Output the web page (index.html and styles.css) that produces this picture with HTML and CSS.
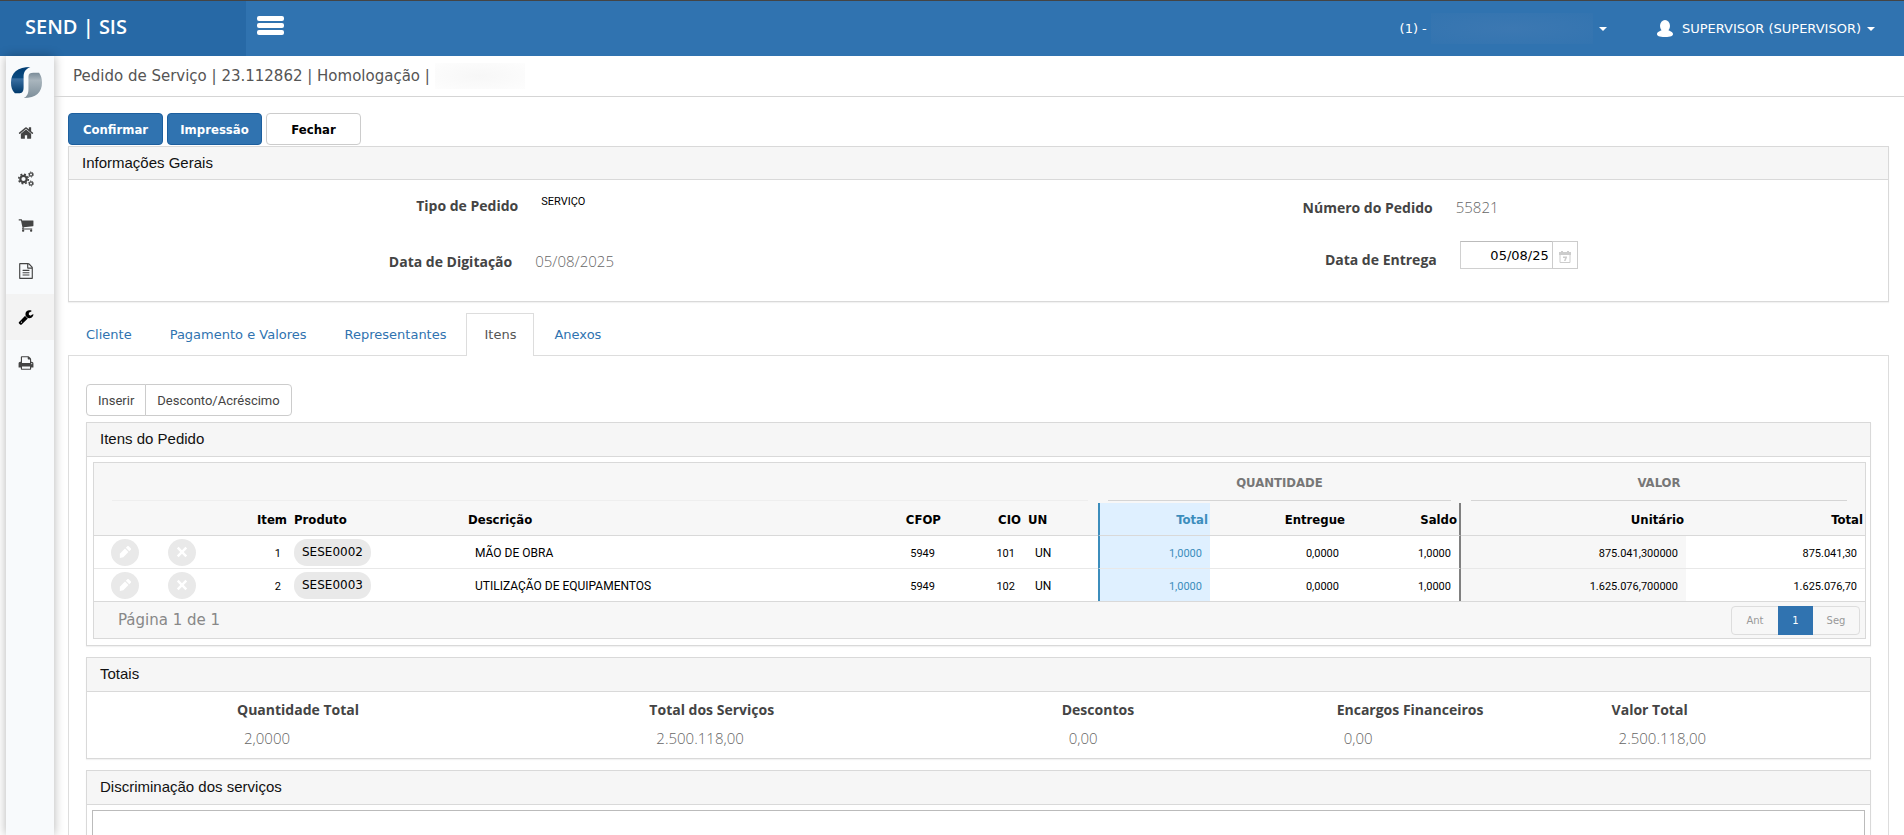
FILE: index.html
```
<!DOCTYPE html>
<html lang="pt-BR">
<head>
    <meta charset="UTF-8">
    <meta name="viewport" content="width=device-width, initial-scale=1.0">
    <title>SEND | SIS - Pedido de Serviço</title>
    <link rel="stylesheet" href="styles.css">
</head>
<body>
    <header class="topbar">
        <a href="#" class="brand">SEND | SIS</a>
        <button type="button" class="menu-toggle" aria-label="Menu"><span></span><span></span><span></span></button>
        <nav class="top-links">
            <a href="#" class="company">(1) - <span class="company-name"></span><span class="caret"></span></a>
            <a href="#" class="user"><svg class="user-icon" viewBox="0 0 16 17"><ellipse cx="8" cy="6" rx="5" ry="6"/><path d="M0 14c0-2 3-3 5-4h6c2 1 5 2 5 4 0 2-2 3-8 3s-8-1-8-3z"/></svg>SUPERVISOR (SUPERVISOR)<span class="caret"></span></a>
        </nav>
    </header>

    <div class="layout">
        <nav class="sidebar">
            <a href="#" class="logo" aria-label="Início">
                <svg viewBox="0 0 32 32">
                    <defs>
                        <linearGradient id="logoBlue" x1="0" y1="0" x2="0" y2="1">
                            <stop offset="0" stop-color="#003c72"/>
                            <stop offset=".42" stop-color="#0a4a80"/>
                            <stop offset=".45" stop-color="#3b70a3"/>
                            <stop offset="1" stop-color="#00396b"/>
                        </linearGradient>
                        <linearGradient id="logoGray" x1="0" y1="0" x2="0" y2="1">
                            <stop offset="0" stop-color="#7b8c99"/>
                            <stop offset=".3" stop-color="#a9b5bd"/>
                            <stop offset="1" stop-color="#7d8e9a"/>
                        </linearGradient>
                    </defs>
                    <path fill="url(#logoBlue)" d="M20 0C7 0 0 6 0 16c0 5 1 8 4 11h5c3 0 4-2 4-6V10c0-5 2-8 7-10z"/>
                    <path fill="url(#logoGray)" d="M18 10c0-3 2-4 5-4h6c2 3 3 6 3 10 0 10-6 16-19 16 3-1 5-4 5-9z"/>
                </svg>
            </a>
            <a href="#" class="side-link" aria-label="Home">
                <svg viewBox="0 0 1792 1792"><path d="M1472 992v480q0 26-19 45t-45 19h-384v-384h-256v384h-384q-26 0-45-19t-19-45v-480q0-1 .5-3t.5-3l575-474 575 474q1 2 1 6zm223-69l-62 74q-8 9-21 11h-3q-13 0-21-7l-692-577-692 577q-12 8-24 7-13-2-21-11l-62-74q-8-10-7-23.500t11-21.500l719-599q32-26 76-26t76 26l244 204v-195q0-14 9-23t23-9h192q14 0 23 9t9 23v408l219 182q10 8 11 21.500t-7 23.500z"/></svg>
            </a>
            <a href="#" class="side-link" aria-label="Configurações">
                <svg viewBox="0 0 16 16" fill="none" stroke="currentColor">
                    <circle cx="5.500" cy="8" r="3.200" stroke-width="2.200"/>
                    <circle cx="5.500" cy="8" r="4.800" stroke-width="1.600" stroke-dasharray="1.900 1.870"/>
                    <circle cx="13" cy="3.500" r="1.600" stroke-width="1.200"/>
                    <circle cx="13" cy="3.500" r="2.500" stroke-width="1" stroke-dasharray="1.200 1.418"/>
                    <circle cx="13" cy="12.500" r="1.600" stroke-width="1.200"/>
                    <circle cx="13" cy="12.500" r="2.500" stroke-width="1" stroke-dasharray="1.200 1.418"/>
                </svg>
            </a>
            <a href="#" class="side-link" aria-label="Vendas">
                <svg viewBox="0 0 1792 1792"><path d="M704 1536q0 52-38 90t-90 38-90-38-38-90 38-90 90-38 90 38 38 90zm896 0q0 52-38 90t-90 38-90-38-38-90 38-90 90-38 90 38 38 90zm128-1088v512q0 24-16.500 42.500t-40.500 21.500l-1044 122q13 60 13 70 0 16-24 64h920q26 0 45 19t19 45-19 45-45 19h-1024q-26 0-45-19t-19-45q0-11 8-31.500t16-36 21.500-40 15.500-29.500l-177-823h-204q-26 0-45-19t-19-45 19-45 45-19h256q16 0 28.500 6.500t19.500 15.500 13 24.500 8 26 5.500 29.500 4.500 26h1201q26 0 45 19t19 45z"/></svg>
            </a>
            <a href="#" class="side-link" aria-label="Documentos">
                <svg viewBox="0 0 1792 1792"><path d="M1596 380q28 28 48 76t20 88v1152q0 40-28 68t-68 28h-1344q-40 0-68-28t-28-68v-1600q0-40 28-68t68-28h896q40 0 88 20t76 48zm-444-244v376h376q-10-29-22-41l-313-313q-12-12-41-22zm384 1528v-1024h-416q-40 0-68-28t-28-68v-416h-768v1536h1280zm-1024-864q0-14 9-23t23-9h704q14 0 23 9t9 23v64q0 14-9 23t-23 9h-704q-14 0-23-9t-9-23v-64zm736 224q14 0 23 9t9 23v64q0 14-9 23t-23 9h-704q-14 0-23-9t-9-23v-64q0-14 9-23t23-9h704zm0 256q14 0 23 9t9 23v64q0 14-9 23t-23 9h-704q-14 0-23-9t-9-23v-64q0-14 9-23t23-9h704z"/></svg>
            </a>
            <a href="#" class="side-link active" aria-label="Serviços">
                <svg viewBox="0 0 1792 1792"><path d="M448 1472q0-26-19-45t-45-19-45 19-19 45 19 45 45 19 45-19 19-45zm644-420l-682 682q-37 37-90 37-52 0-91-37l-106-108q-38-36-38-90 0-53 38-91l681-681q39 98 114.500 173.500t173.500 114.500zm634-435q0 39-23 106-47 134-164.500 217.500t-258.500 83.500q-185 0-316.500-131.500t-131.500-316.500 131.500-316.500 316.500-131.500q58 0 121.500 16.500t107.500 46.500q16 11 16 28t-16 28l-293 169v224l193 107q5-3 79-48.500t135.500-81 70.500-35.500q15 0 23.500 10t8.500 25z"/></svg>
            </a>
            <a href="#" class="side-link" aria-label="Relatórios">
                <svg viewBox="0 0 1792 1792"><path d="M448 1536h896v-256h-896v256zm0-640h896v-384h-160q-40 0-68-28t-28-68v-160h-640v640zm1152 64q0-26-19-45t-45-19-45 19-19 45 19 45 45 19 45-19 19-45zm128 0v416q0 13-9.500 22.500t-22.500 9.500h-224v160q0 40-28 68t-68 28h-960q-40 0-68-28t-28-68v-160h-224q-13 0-22.500-9.500t-9.500-22.500v-416q0-79 56.500-135.500t135.500-56.500h64v-544q0-40 28-68t68-28h672q40 0 88 20t76 48l152 152q28 28 48 76t20 88v256h64q79 0 135.500 56.500t56.500 135.500z"/></svg>
            </a>
        </nav>

        <main class="content">
            <div class="page-title">Pedido de Serviço | 23.112862 | Homologação | <span class="page-env"></span></div>

            <div class="page-body">
                <div class="actions">
                    <button type="button" class="btn btn-primary">Confirmar</button>
                    <button type="button" class="btn btn-primary">Impressão</button>
                    <button type="button" class="btn">Fechar</button>
                </div>

                <section class="panel">
                    <h2 class="panel-title">Informações Gerais</h2>
                    <div class="form">
                        <div class="form-col">
                            <div class="form-row form-row-order">
                                <span class="label">Tipo de Pedido</span>
                                <span class="value-small">SERVIÇO</span>
                            </div>
                            <div class="form-row">
                                <span class="label">Data de Digitação</span>
                                <span class="value">05/08/2025</span>
                            </div>
                        </div>
                        <div class="form-col form-col-right">
                            <div class="form-row">
                                <span class="label">Número do Pedido</span>
                                <span class="value">55821</span>
                            </div>
                            <div class="form-row form-row-date">
                                <label class="label" for="entrega">Data de Entrega</label>
                                <div class="date-field">
                                    <input type="text" id="entrega" value="05/08/25">
                                    <button type="button" aria-label="Abrir calendário">
                                        <svg viewBox="0 0 12 12"><path d="M1 3v8.500h10V3" fill="none" stroke="#ccc"/><path d="M0 1h2V0h2v1h4V0h2v1h2v3H0z" fill="#ccc"/><path d="M4 5.500h4v1L6.500 10H5l1-3H4z" fill="#ccc"/></svg>
                                    </button>
                                </div>
                            </div>
                        </div>
                    </div>
                </section>

                <nav class="tabs">
                    <a href="#">Cliente</a>
                    <a href="#">Pagamento e Valores</a>
                    <a href="#">Representantes</a>
                    <a href="#" class="active">Itens</a>
                    <a href="#">Anexos</a>
                </nav>

                <div class="tab-content">
                    <div class="btn-group">
                        <button type="button">Inserir</button>
                        <button type="button">Desconto/Acréscimo</button>
                    </div>

                    <section class="panel">
                        <h2 class="panel-title">Itens do Pedido</h2>
                        <div class="grid-wrap">
                            <table class="grid">
                                <colgroup>
                                    <col class="c-edit"><col class="c-remove"><col class="c-item"><col class="c-product"><col>
                                    <col class="c-cfop"><col class="c-cio"><col class="c-un"><col class="c-total"><col class="c-delivered">
                                    <col class="c-balance"><col class="c-unit"><col class="c-amount">
                                </colgroup>
                                <thead>
                                    <tr class="groups">
                                        <th colspan="8"><span class="group group-empty"></span></th>
                                        <th colspan="3"><span class="group">QUANTIDADE</span></th>
                                        <th colspan="2"><span class="group group-last">VALOR</span></th>
                                    </tr>
                                    <tr class="columns">
                                        <th></th>
                                        <th></th>
                                        <th class="num">Item</th>
                                        <th>Produto</th>
                                        <th>Descrição</th>
                                        <th class="num">CFOP</th>
                                        <th class="num">CIO</th>
                                        <th>UN</th>
                                        <th class="num highlight">Total</th>
                                        <th class="num">Entregue</th>
                                        <th class="num divider">Saldo</th>
                                        <th class="num">Unitário</th>
                                        <th class="num">Total</th>
                                    </tr>
                                </thead>
                                <tbody>
                                    <tr>
                                        <td class="icon"><button type="button" class="round" aria-label="Editar"><svg viewBox="0 0 14 14"><path d="M1 9l6-6 4 4-6 6-4 1zM8 2l2-2h1l3 3v1l-2 2z"/></svg></button></td>
                                        <td class="icon"><button type="button" class="round" aria-label="Excluir"><svg viewBox="0 0 14 14"><path d="M3 1l4 4 4-4 2 2-4 4 4 4-2 2-4-4-4 4-2-2 4-4-4-4z"/></svg></button></td>
                                        <td class="num">1</td>
                                        <td class="product"><span class="badge">SESE0002</span></td>
                                        <td class="text">MÃO DE OBRA</td>
                                        <td class="num">5949</td>
                                        <td class="num">101</td>
                                        <td class="text">UN</td>
                                        <td class="num highlight">1,0000</td>
                                        <td class="num">0,0000</td>
                                        <td class="num divider">1,0000</td>
                                        <td class="num shaded">875.041,300000</td>
                                        <td class="num">875.041,30</td>
                                    </tr>
                                    <tr>
                                        <td class="icon"><button type="button" class="round" aria-label="Editar"><svg viewBox="0 0 14 14"><path d="M1 9l6-6 4 4-6 6-4 1zM8 2l2-2h1l3 3v1l-2 2z"/></svg></button></td>
                                        <td class="icon"><button type="button" class="round" aria-label="Excluir"><svg viewBox="0 0 14 14"><path d="M3 1l4 4 4-4 2 2-4 4 4 4-2 2-4-4-4 4-2-2 4-4-4-4z"/></svg></button></td>
                                        <td class="num">2</td>
                                        <td class="product"><span class="badge">SESE0003</span></td>
                                        <td class="text">UTILIZAÇÃO DE EQUIPAMENTOS</td>
                                        <td class="num">5949</td>
                                        <td class="num">102</td>
                                        <td class="text">UN</td>
                                        <td class="num highlight">1,0000</td>
                                        <td class="num">0,0000</td>
                                        <td class="num divider">1,0000</td>
                                        <td class="num shaded">1.625.076,700000</td>
                                        <td class="num">1.625.076,70</td>
                                    </tr>
                                </tbody>
                            </table>
                            <div class="grid-footer">
                                <span>Página 1 de 1</span>
                                <div class="pager">
                                    <button type="button">Ant</button>
                                    <button type="button" class="current">1</button>
                                    <button type="button">Seg</button>
                                </div>
                            </div>
                        </div>
                    </section>

                    <section class="panel">
                        <h2 class="panel-title">Totais</h2>
                        <dl class="totals">
                            <div><dt>Quantidade Total</dt><dd>2,0000</dd></div>
                            <div><dt>Total dos Serviços</dt><dd>2.500.118,00</dd></div>
                            <div><dt>Descontos</dt><dd>0,00</dd></div>
                            <div><dt>Encargos Financeiros</dt><dd>0,00</dd></div>
                            <div><dt>Valor Total</dt><dd>2.500.118,00</dd></div>
                        </dl>
                    </section>

                    <section class="panel">
                        <h2 class="panel-title"><label for="discriminacao">Discriminação dos serviços</label></h2>
                        <div class="notes">
                            <textarea id="discriminacao" rows="6"></textarea>
                        </div>
                    </section>
                </div>
            </div>
        </main>
    </div>
</body>
</html>
```
FILE: styles.css
```
* {
    box-sizing: border-box;
}

body {
    margin: 0;
    height: 100vh;
    overflow: hidden;
    display: flex;
    flex-direction: column;
    background: #fff;
    color: #444;
    font-family: "DejaVu Sans", sans-serif;
    font-size: 13px;
}

a {
    text-decoration: none;
}

button,
input,
textarea {
    font-family: inherit;
    font-size: inherit;
    margin: 0;
}

button {
    cursor: pointer;
}

/* Top bar */
.topbar {
    flex: none;
    display: flex;
    height: 56px;
    background: #3073b0;
    border-top: 1px solid #444;
    color: #fff;
}

.brand {
    width: 246px;
    padding-left: 25px;
    background: #2769a6;
    color: #fff;
    font-family: "Open Sans", sans-serif;
    font-size: 20px;
    font-weight: 600;
    line-height: 52px;
}

.menu-toggle {
    display: flex;
    flex-direction: column;
    gap: 2px;
    height: 35px;
    padding: 15px 11px 0;
    border: 0;
    background: none;
}

.menu-toggle span {
    width: 27px;
    height: 5px;
    border-radius: 2px;
    background: #fff;
}

.top-links {
    display: flex;
    align-items: center;
    gap: 50px;
    margin-left: auto;
    padding-right: 29px;
}

.top-links a {
    display: flex;
    align-items: center;
    color: #fff;
    white-space: pre;
}

.company-name {
    width: 162px;
    height: 31px;
    background: radial-gradient(#3c78b2, #3374b0);
}

.caret {
    margin-left: 6px;
    border: 4px solid transparent;
    border-top-color: #fff;
    border-bottom: 0;
}

.user-icon {
    width: 16px;
    height: 17px;
    margin-right: 9px;
    fill: #fff;
}

/* Side menu */
.layout {
    flex: 1;
    display: flex;
    min-height: 0;
}

.sidebar {
    flex: none;
    width: 48px;
    margin-left: 6px;
    background: #f8fafc;
    box-shadow: 0 0 10px rgba(0, 0, 0, 0.3);
}

.logo {
    display: block;
    height: 54px;
    padding: 11px 5px 0;
}

.logo svg {
    display: block;
    width: 31px;
    height: 31px;
}

.side-link {
    display: flex;
    align-items: center;
    height: 46px;
    padding-left: 12px;
    color: #444;
}

.side-link svg {
    width: 16px;
    height: 16px;
}

.side-link path {
    fill: currentColor;
}

.side-link.active {
    background: #f3f3f3;
    color: #000;
}

/* Page */
.content {
    flex: 1;
    min-width: 0;
}

.page-title {
    display: flex;
    align-items: center;
    height: 41px;
    padding-left: 19px;
    border-bottom: 1px solid #d5d5d5;
    color: #555;
    font-size: 15px;
    white-space: pre;
}

.page-env {
    width: 90px;
    height: 26px;
    background: radial-gradient(#f7f7f7, #fdfdfd);
}

.page-body {
    padding: 16px 15px 0 14px;
}

.actions {
    display: flex;
    gap: 4px;
    margin-bottom: 1px;
}

.btn {
    width: 95px;
    height: 32px;
    border: 1px solid #ccc;
    border-radius: 4px;
    background: #fff;
    color: #000;
    font-family: "DejaVu Sans Condensed", "DejaVu Sans", sans-serif;
    font-weight: bold;
}

.btn-primary {
    border-color: #1d5f9e;
    background: #3073b0;
    color: #fff;
}

.panel {
    border: 1px solid #d9d9d9;
    background: #fff;
    box-shadow: 0 1px 1px rgba(0, 0, 0, 0.05);
}

.panel-title {
    margin: 0;
    height: 33px;
    padding-left: 13px;
    border-bottom: 1px solid #d9d9d9;
    background: #f6f6f6;
    color: #111;
    font-family: "Liberation Sans", sans-serif;
    font-size: 15px;
    font-weight: normal;
    line-height: 32px;
}

/* General info */
.form {
    display: grid;
    grid-template-columns: 1fr 1fr;
    height: 121px;
    padding-top: 15px;
}

.form-col {
    display: flex;
    flex-direction: column;
    gap: 36px;
}

.form-col-right {
    gap: 32px;
    padding-top: 2px;
}

.form-row {
    display: grid;
    grid-template-columns: 1fr 1fr;
    grid-template-rows: 20px;
    gap: 23px;
    align-items: center;
}

.form-row-order {
    padding-left: 12px;
}

.form-col-right .form-row {
    padding-left: 22px;
}

.form-col-right .form-row-date {
    padding-left: 30px;
}

.label,
dt {
    color: #444;
    font-family: "Open Sans", sans-serif;
    font-size: 14px;
    font-weight: bold;
}

.label {
    text-align: right;
}

.value,
dd {
    color: #666;
    font-family: "Open Sans", sans-serif;
    font-size: 15px;
    font-weight: 300;
}

.value-small {
    align-self: start;
    color: #000;
    font-family: Roboto, sans-serif;
    font-size: 11px;
}

.date-field {
    display: flex;
    align-self: end;
}

.date-field input {
    width: 93px;
    height: 28px;
    padding: 0 3px;
    border: 1px solid #d0d0d0;
    border-top-color: #bbb;
    background: #fff;
    color: #000;
    text-align: right;
}

.date-field button {
    width: 26px;
    margin-left: -1px;
    padding: 4px 0 0 6px;
    border: 1px solid #ccc;
    background: #fff;
}

.date-field svg {
    display: block;
    width: 12px;
    height: 12px;
}

/* Tabs */
.tabs {
    display: flex;
    margin-top: 11px;
    height: 43px;
    border-bottom: 1px solid #ddd;
    line-height: 41px;
}

.tabs a {
    height: 43px;
    margin-right: 2px;
    padding: 0 17px;
    border: 1px solid transparent;
    border-bottom: 0;
    color: #3073b0;
}

.tabs .active {
    border-color: #ddd;
    background: #fff;
    color: #555;
}

.tab-content {
    padding: 28px 17px 0;
    border: 1px solid #ddd;
    border-top: 0;
}

.tab-content .panel {
    margin-bottom: 11px;
}

.tab-content .panel-title {
    height: 34px;
}

.btn-group {
    display: flex;
    margin-bottom: 6px;
}

.btn-group button {
    height: 32px;
    padding: 0 11px;
    border: 1px solid #ccc;
    border-radius: 4px;
    background: #fff;
    color: #444;
    font-family: Roboto, sans-serif;
}

.btn-group button:first-child {
    border-radius: 4px 0 0 4px;
}

.btn-group button:last-child {
    margin-left: -1px;
    border-radius: 0 4px 4px 0;
}

/* Items table */
.grid-wrap {
    padding: 5px 4px 6px 6px;
}

.grid {
    width: 100%;
    table-layout: fixed;
    border: 1px solid #d9d9d9;
    border-spacing: 0;
    color: #000;
}

.c-edit { width: 57px; }
.c-remove { width: 58px; }
.c-item { width: 80px; }
.c-product { width: 174px; }
.c-cfop { width: 78px; }
.c-cio { width: 80px; }
.c-un { width: 75px; }
.c-total { width: 112px; }
.c-delivered { width: 137px; }
.c-balance { width: 114px; }
.c-unit { width: 225px; }
.c-amount { width: 179px; }

.grid th {
    padding: 0 2px 0 5px;
    background: #f7f7f7;
    font-family: "DejaVu Sans Condensed", "DejaVu Sans", sans-serif;
    font-size: 13px;
    font-weight: bold;
    text-align: left;
}

.grid .groups th {
    height: 40px;
    padding: 0 10px;
    vertical-align: top;
}

.grid .groups th:first-child {
    padding-left: 18px;
}

.group {
    display: block;
    height: 38px;
    border-bottom: 1px solid #d5d5d5;
    color: #777;
    line-height: 40px;
    text-align: center;
}

.group-empty {
    border-color: #eee;
}

.group-last {
    margin-right: 8px;
}

.grid .columns th {
    height: 33px;
    border-bottom: 1px solid #d9d9d9;
}

.grid td {
    height: 33px;
    padding: 2px 8px 0 5px;
    border-bottom: 1px solid #e8e8e8;
    font-family: Roboto, sans-serif;
    font-size: 12px;
}

.grid tbody tr:last-child td {
    height: 32px;
    border-bottom: 0;
}

.grid .num {
    text-align: right;
}

.grid td.num {
    font-size: 11px;
}

.grid .text {
    padding-left: 12px;
}

.grid .highlight {
    border-left: 2px solid #3c8dbc;
    background: #dff0ff;
    color: #3c8dbc;
}

.grid .divider {
    border-right: 2px solid #808080;
}

.grid .shaded {
    background: #f7f7f7;
}

.grid .icon {
    padding: 0 0 0 17px;
}

.grid .product {
    padding: 0 0 0 5px;
}

.round {
    display: flex;
    align-items: center;
    justify-content: center;
    width: 28px;
    height: 27px;
    padding: 0;
    border: 0;
    border-radius: 50%;
    background: #e9e9e9;
}

.round svg {
    width: 12px;
    height: 12px;
    fill: #fff;
}

.badge {
    display: block;
    width: max-content;
    padding: 0 8px;
    border-radius: 13px;
    background: #e9e9e9;
    font-family: "DejaVu Sans", sans-serif;
    line-height: 27px;
}

.grid-footer {
    display: flex;
    align-items: center;
    justify-content: space-between;
    height: 37px;
    padding: 0 5px 0 24px;
    border: 1px solid #d9d9d9;
    border-top: 0;
    background: #f7f7f7;
    color: #888;
    font-size: 15px;
}

.pager {
    display: flex;
    height: 29px;
    border: 1px solid #ddd;
    border-radius: 4px;
}

.pager button {
    width: 46px;
    padding: 0;
    border: 0;
    background: none;
    color: #999;
    font-size: 10px;
}

.pager .current {
    width: 35px;
    margin: -1px 0;
    background: #3073b0;
    color: #fff;
}

/* Totals */
.totals {
    display: grid;
    grid-template-columns: 150fr 150fr 100fr 100fr 94fr;
    margin: 0;
    height: 66px;
    padding: 8px 0 0 150px;
}

.totals dt {
    line-height: 20px;
}

.totals dd {
    margin: 8px 0 0 7px;
    line-height: 20px;
}

.notes {
    padding: 5px;
}

.notes textarea {
    display: block;
    width: 100%;
    border: 1px solid #bbb;
    background: #fff;
    resize: none;
}
```
